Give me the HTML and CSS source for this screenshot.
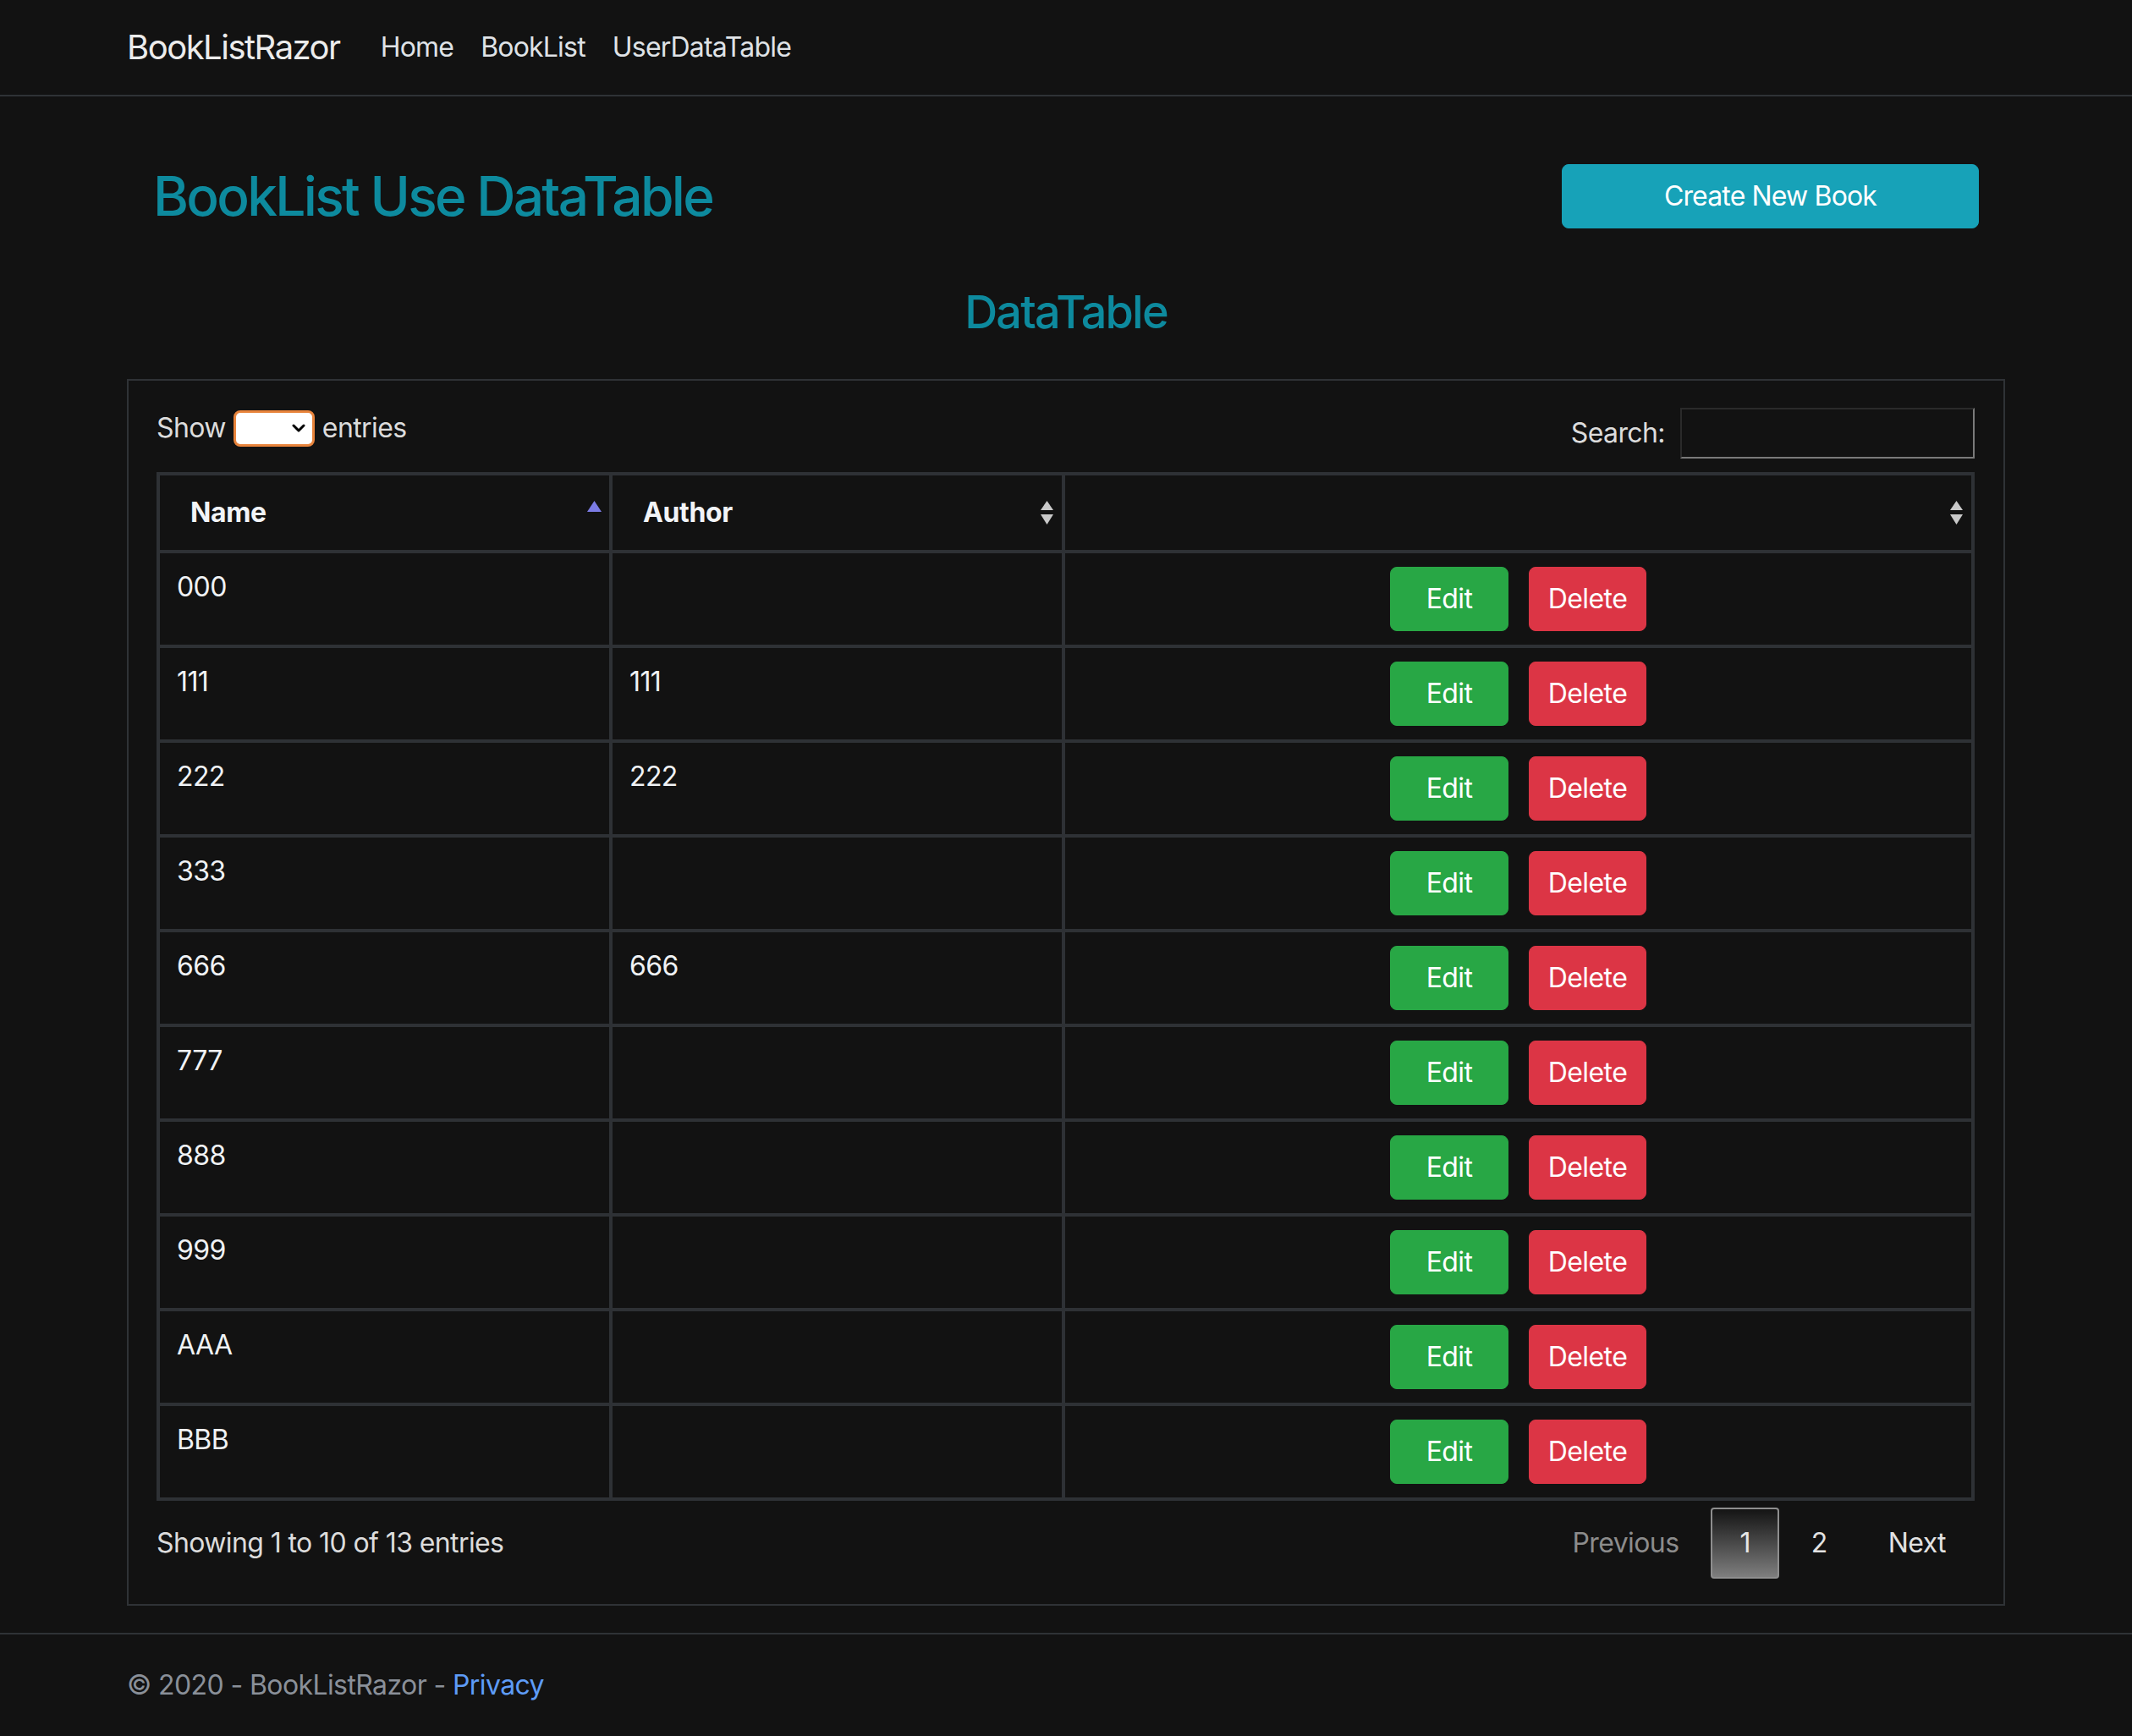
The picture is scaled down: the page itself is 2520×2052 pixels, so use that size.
FILE: index.html
```html
<!DOCTYPE html>
<html lang="en">
<head>
<meta charset="utf-8">
<title>BookListRazor</title>
<link rel="stylesheet" href="styles.css">
</head>
<body>
<header class="navbar">
  <div class="container nav-inner">
    <a class="brand">BookListRazor</a>
    <nav class="nav-links">
      <a class="nav-link">Home</a>
      <a class="nav-link">BookList</a>
      <a class="nav-link">UserDataTable</a>
    </nav>
  </div>
</header>

<main class="container main">
  <div class="title-row">
    <h2 class="page-title">BookList Use DataTable</h2>
    <button class="btn btn-info">Create New Book</button>
  </div>
  <h3 class="table-title">DataTable</h3>

  <div class="dt-wrapper">
    <div class="dt-top">
      <div class="dt-length">
        <span>Show</span>
        <span class="fake-select"><svg class="chevron" viewBox="0 0 16 10" width="16" height="10"><path d="M2 2 L8 8 L14 2" fill="none" stroke="#000" stroke-width="3" stroke-linecap="round" stroke-linejoin="round"/></svg></span>
        <span>entries</span>
      </div>
      <div class="dt-filter">
        <span>Search:</span>
        <input type="search" class="search-input">
      </div>
    </div>

    <table class="dt">
      <colgroup>
        <col class="col-name">
        <col class="col-author">
        <col>
      </colgroup>
      <thead>
        <tr>
          <th>Name<svg class="sort" viewBox="0 0 19 30" width="19" height="30"><path d="M9.5 1 L18 14 L1 14 Z" fill="#7b7be4"/></svg></th>
          <th>Author<svg class="sort" viewBox="0 0 19 30" width="19" height="30"><path d="M9.5 1 L17 12 L2 12 Z" fill="#c9c9c9"/><path d="M2 17 L17 17 L9.5 29 Z" fill="#c9c9c9"/></svg></th>
          <th><svg class="sort" viewBox="0 0 19 30" width="19" height="30"><path d="M9.5 1 L17 12 L2 12 Z" fill="#c9c9c9"/><path d="M2 17 L17 17 L9.5 29 Z" fill="#c9c9c9"/></svg></th>
        </tr>
      </thead>
      <tbody>
        <tr><td>000</td><td></td><td><div class="actions"><button class="btn btn-success">Edit</button><button class="btn btn-danger">Delete</button></div></td></tr>
        <tr><td>111</td><td>111</td><td><div class="actions"><button class="btn btn-success">Edit</button><button class="btn btn-danger">Delete</button></div></td></tr>
        <tr><td>222</td><td>222</td><td><div class="actions"><button class="btn btn-success">Edit</button><button class="btn btn-danger">Delete</button></div></td></tr>
        <tr><td>333</td><td></td><td><div class="actions"><button class="btn btn-success">Edit</button><button class="btn btn-danger">Delete</button></div></td></tr>
        <tr><td>666</td><td>666</td><td><div class="actions"><button class="btn btn-success">Edit</button><button class="btn btn-danger">Delete</button></div></td></tr>
        <tr><td>777</td><td></td><td><div class="actions"><button class="btn btn-success">Edit</button><button class="btn btn-danger">Delete</button></div></td></tr>
        <tr><td>888</td><td></td><td><div class="actions"><button class="btn btn-success">Edit</button><button class="btn btn-danger">Delete</button></div></td></tr>
        <tr><td>999</td><td></td><td><div class="actions"><button class="btn btn-success">Edit</button><button class="btn btn-danger">Delete</button></div></td></tr>
        <tr><td>AAA</td><td></td><td><div class="actions"><button class="btn btn-success">Edit</button><button class="btn btn-danger">Delete</button></div></td></tr>
        <tr><td>BBB</td><td></td><td><div class="actions"><button class="btn btn-success">Edit</button><button class="btn btn-danger">Delete</button></div></td></tr>
      </tbody>
    </table>

    <div class="dt-bottom">
      <div class="dt-info">Showing 1 to 10 of 13 entries</div>
      <div class="dt-paginate">
        <a class="pg disabled">Previous</a>
        <a class="pg current">1</a>
        <a class="pg">2</a>
        <a class="pg">Next</a>
      </div>
    </div>
  </div>
</main>

<footer class="footer">
  <div class="container">© 2020 - BookListRazor - <a class="footer-link">Privacy</a></div>
</footer>
</body>
</html>
```

FILE: styles.css
```css
* { box-sizing: border-box; }

html, body {
  margin: 0;
  padding: 0;
}

body {
  background: #121212;
  color: #e8eaed;
  font-family: Inter, "Noto Sans", "Liberation Sans", sans-serif;
  font-size: 32px;
  line-height: 48px;
  letter-spacing: -0.6px;
}

.container {
  width: 2280px;
  margin: 0 auto;
  padding: 0 30px;
}

/* navbar */
.navbar {
  border-bottom: 2px solid #2f3236;
}
.nav-inner {
  display: flex;
  align-items: center;
  height: 112px;
}
.brand {
  font-size: 40px;
  line-height: 60px;
  padding: 10px 0;
  margin-right: 32px;
  color: #ececec;
  letter-spacing: -1.5px;
}
.nav-links {
  display: flex;
}
.nav-link {
  padding: 16px 16px;
  color: #dfe2e6;
  letter-spacing: -0.8px;
}

.main {
  margin-top: 32px;
}

/* title */
.title-row {
  display: flex;
  justify-content: space-between;
  align-items: flex-start;
  padding: 48px 31px 48px 31px;
}
.page-title {
  margin: 0 0 16px;
  font-size: 64px;
  line-height: 76.8px;
  font-weight: 500;
  color: #0d8a9e;
  letter-spacing: -2.7px;
}
.btn {
  font-family: inherit;
  font-size: 32px;
  line-height: 48px;
  color: #fff;
  border: 1px solid transparent;
  border-radius: 8px;
  padding: 13px 0;
  cursor: pointer;
  letter-spacing: -0.6px;
}
.btn-info {
  width: 493px;
  background: #17a2b8;
  border-color: #17a2b8;
  letter-spacing: -0.85px;
}
.btn-success {
  width: 140px;
  background: #28a745;
  border-color: #28a745;
}
.btn-danger {
  width: 139px;
  background: #dc3545;
  border-color: #dc3545;
}

.table-title {
  margin: 0 0 46px;
  text-align: center;
  font-size: 54px;
  line-height: 67.2px;
  font-weight: 500;
  color: #0d8a9e;
  letter-spacing: -1.8px;
}

/* datatable wrapper */
.dt-wrapper {
  border: 2px solid #2f3236;
  padding: 32px 34px 30px 33px;
  margin-bottom: 32px;
}
.dt-top {
  display: flex;
  justify-content: space-between;
  align-items: flex-start;
}
.dt-length {
  display: flex;
  align-items: center;
  gap: 9px;
  height: 48px;
  color: #dcdcdc;
}
.fake-select {
  width: 96px;
  height: 43px;
  background: #fff;
  border: 3px solid #e8843c;
  border-radius: 8px;
  display: flex;
  justify-content: flex-end;
  align-items: center;
  padding-right: 8px;
}
.chevron { display: block; }

.dt-filter {
  display: flex;
  align-items: center;
  gap: 18px;
  color: #dcdcdc;
}
.search-input {
  width: 348px;
  height: 60px;
  background: #121212;
  border-style: solid;
  border-width: 2px;
  border-color: #2a2a2a #7a7a7a #7a7a7a #2a2a2a;
  color: #e8eaed;
  font: inherit;
  padding: 0 8px;
}

/* table */
.dt {
  width: 100%;
  margin-top: 16px;
  table-layout: fixed;
  border-collapse: separate;
  border-spacing: 0;
  border-top: 4px solid #2e3135;
  border-left: 4px solid #2e3135;
}
.col-name { width: 535px; }
.col-author { width: 535px; }

.dt th,
.dt td {
  border-right: 4px solid #2e3135;
  border-bottom: 4px solid #2e3135;
}
.dt th {
  position: relative;
  padding: 20px 36px;
  text-align: left;
  font-weight: 700;
  color: #f2f4f7;
  height: 92px;
  letter-spacing: -0.4px;
}
.sort {
  position: absolute;
  right: 8px;
  top: 29px;
}
.dt td {
  padding: 16px 20px;
  vertical-align: top;
  color: #f0f2f5;
  height: 112px;
}
.actions {
  display: flex;
  justify-content: center;
  gap: 24px;
}

/* bottom */
.dt-bottom {
  display: flex;
  justify-content: space-between;
  align-items: center;
  margin-top: 8px;
}
.dt-info {
  color: #dcdcdc;
}
.dt-paginate {
  display: flex;
}
.pg {
  display: block;
  padding: 16px 32px;
  margin-left: 4px;
  border: 2px solid transparent;
  border-radius: 4px;
  color: #e2e2e2;
  line-height: 48px;
}
.pg.disabled {
  color: #8c8c8c;
}
.pg.current {
  background: linear-gradient(to bottom, #141414 0%, #7e7e7e 100%);
  border-color: #8e8e8e;
  color: #e6e6e6;
}

/* footer */
.footer {
  border-top: 2px solid #2f3236;
  line-height: 120px;
  color: #8a9099;
}
.footer-link {
  color: #5e9cf7;
}
```
